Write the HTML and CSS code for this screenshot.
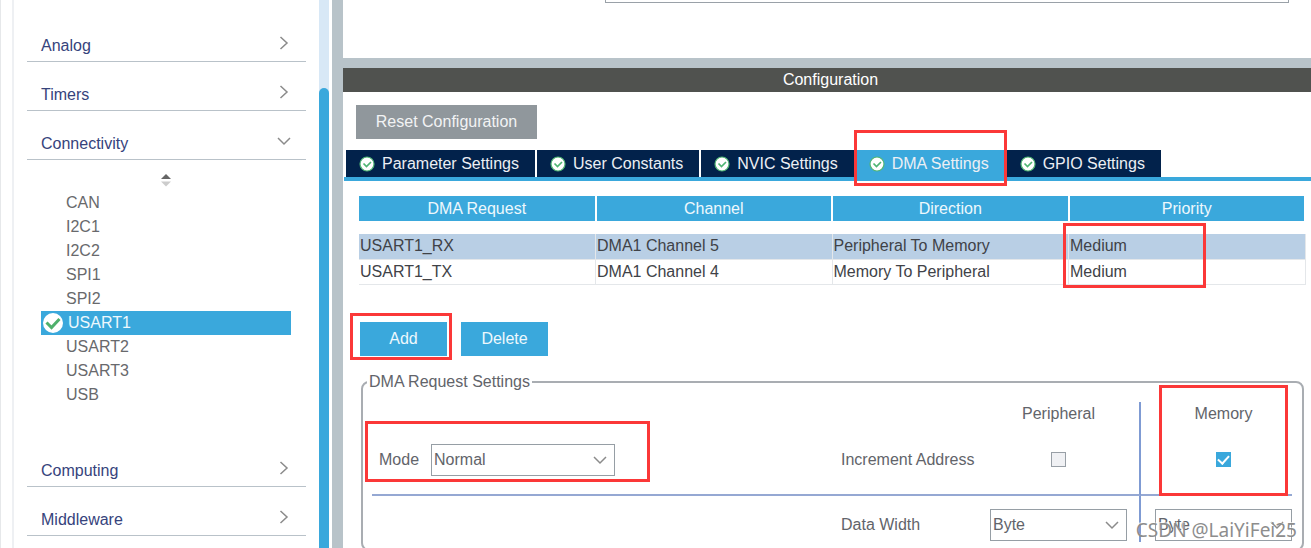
FILE: index.html
```html
<!DOCTYPE html>
<html lang="en">
<head>
<meta charset="utf-8">
<title>USART1 Configuration</title>
<link rel="stylesheet" href="styles.css">
</head>
<body>
<svg width="0" height="0" class="defs" aria-hidden="true">
  <symbol id="right" viewBox="0 0 14 14"><path d="M3.500 1l6.500 6-6.500 6" fill="none" stroke="#8b8b8b" stroke-width="1.500"/></symbol>
  <symbol id="down" viewBox="0 0 14 14"><path d="M1 4l6 6 6-6" fill="none" stroke="#8b8b8b" stroke-width="1.500"/></symbol>
  <symbol id="ok" viewBox="0 0 16 16"><circle cx="8" cy="8" r="7" fill="#fff" stroke="#4fb573" stroke-width="1.200"/><path d="M4.500 7.500l3 3 4.500-4.500" fill="none" stroke="#4fb573" stroke-width="1.700"/></symbol>
</svg>
<div class="app">
  <nav class="sidebar">
    <div class="categories">
      <button class="category">Analog<svg class="chev"><use href="#right"/></svg></button>
      <button class="category">Timers<svg class="chev"><use href="#right"/></svg></button>
      <button class="category">Connectivity<svg class="chev"><use href="#down"/></svg></button>
      <div class="group">
        <svg class="sort" viewBox="0 0 10 14"><path d="M0 6l5-5 5 5z" fill="#666"/><path d="M0 8.500h10l-5 5z" fill="#ccc"/></svg>
        <ul class="items">
          <li><a class="item" href="#">CAN</a></li>
          <li><a class="item" href="#">I2C1</a></li>
          <li><a class="item" href="#">I2C2</a></li>
          <li><a class="item" href="#">SPI1</a></li>
          <li><a class="item" href="#">SPI2</a></li>
          <li><a class="item selected" href="#"><svg class="badge" viewBox="0 0 20 20"><circle cx="10" cy="10" r="10" fill="#fff"/><path d="M3.500 9.500l5 5 8-8.500" fill="none" stroke="#4fb06c" stroke-width="3"/></svg>USART1</a></li>
          <li><a class="item" href="#">USART2</a></li>
          <li><a class="item" href="#">USART3</a></li>
          <li><a class="item" href="#">USB</a></li>
        </ul>
      </div>
      <button class="category">Computing<svg class="chev"><use href="#right"/></svg></button>
      <button class="category">Middleware<svg class="chev"><use href="#right"/></svg></button>
    </div>
    <div class="track"><div class="thumb"></div></div>
  </nav>
  <main class="main">
    <section class="upper"><div class="upper-box"></div></section>
    <h1 class="title">Configuration</h1>
    <div class="reset-row"><button class="btn reset">Reset Configuration</button></div>
    <div class="tabs">
      <button class="tab"><svg class="ok"><use href="#ok"/></svg>Parameter Settings</button>
      <button class="tab"><svg class="ok"><use href="#ok"/></svg>User Constants</button>
      <button class="tab"><svg class="ok"><use href="#ok"/></svg>NVIC Settings</button>
      <button class="tab active"><svg class="ok"><use href="#ok"/></svg>DMA Settings<span class="mark mark-tab"></span></button>
      <button class="tab"><svg class="ok"><use href="#ok"/></svg>GPIO Settings</button>
    </div>
    <section class="panel">
      <table class="requests">
        <thead>
          <tr><th>DMA Request</th><th>Channel</th><th>Direction</th><th>Priority</th></tr>
        </thead>
        <tbody>
          <tr class="current"><td>USART1_RX</td><td>DMA1 Channel 5</td><td>Peripheral To Memory</td><td>Medium<span class="mark mark-priority"></span></td></tr>
          <tr><td>USART1_TX</td><td>DMA1 Channel 4</td><td>Memory To Peripheral</td><td>Medium</td></tr>
        </tbody>
      </table>
      <div class="actions">
        <div class="anchor"><button class="btn">Add</button><span class="mark mark-add"></span></div>
        <button class="btn">Delete</button>
      </div>
      <fieldset class="settings">
        <legend>DMA Request Settings</legend>
        <div class="grid">
          <div class="cell"></div>
          <div class="cell"></div>
          <div class="cell center divider">Peripheral</div>
          <div class="cell center memory">Memory<span class="mark mark-memory"></span></div>

          <div class="cell ruled mode">
            <label for="mode">Mode</label>
            <span class="select mode-select"><select id="mode"><option>Normal</option></select><svg class="arrow"><use href="#down"/></svg></span>
            <span class="mark mark-mode"></span>
          </div>
          <div class="cell ruled">Increment Address</div>
          <div class="cell ruled center divider"><input type="checkbox" class="check" aria-label="Increment Address Peripheral" disabled></div>
          <div class="cell ruled center memory"><input type="checkbox" class="check" aria-label="Increment Address Memory" checked></div>

          <div class="cell low"></div>
          <div class="cell low">Data Width</div>
          <div class="cell low divider"><span class="select"><select aria-label="Data Width Peripheral"><option>Byte</option></select><svg class="arrow"><use href="#down"/></svg></span></div>
          <div class="cell low memory"><span class="select"><select aria-label="Data Width Memory"><option>Byte</option></select><svg class="arrow"><use href="#down"/></svg></span></div>
        </div>
      </fieldset>
    </section>
  </main>
  <div class="watermark">CSDN @LaiYiFei25</div>
</div>
</body>
</html>
```
FILE: styles.css
```css
* { box-sizing: border-box; }

body {
  margin: 0;
  font: 16px/20px "Liberation Sans", Arial, sans-serif;
  color: #62646a;
  background: #fff;
}

button, select, input { font: inherit; color: inherit; margin: 0; }
button { border: 0; padding: 0; background: none; cursor: pointer; }
.defs { position: absolute; }

.app {
  position: relative;
  display: flex;
  height: 100vh;
  overflow: hidden;
}

/* Sidebar */
.sidebar {
  flex: none;
  width: 343px;
  display: flex;
  border-left: 1px solid #e6e8ea;
  border-right: 11px solid #b8c3c9;
}
.categories {
  flex: 1;
  margin-left: 11px;
  padding: 13px 13px 0 13px;
  border-left: 2px solid #eef0f3;
}
.category {
  display: flex;
  justify-content: space-between;
  width: 100%;
  height: 49px;
  padding: 23px 15px 0 14px;
  border-bottom: 1px solid #b9c2c9;
  color: #36437c;
  text-align: left;
}
.chev { width: 14px; height: 14px; }
.group { padding: 13px 15px 31px 14px; }
.sort { display: block; width: 10px; height: 14px; margin: 0 auto 4px; }
.items { list-style: none; margin: 0; padding: 0; }
.item {
  display: flex;
  align-items: center;
  height: 24px;
  padding-left: 25px;
  color: #68696c;
  text-decoration: none;
}
.item.selected {
  gap: 5px;
  padding-left: 2px;
  background: #3aa8dc;
  color: #eef8fd;
}
.badge { width: 20px; height: 20px; }
.track {
  width: 10px;
  margin-right: 3px;
  padding-top: 88px;
  background: #d8e8f6;
}
.thumb { height: 100%; border-radius: 5px 5px 0 0; background: #3aa8dc; }

/* Main area */
.main { flex: 1; min-width: 0; }
.upper {
  height: 68px;
  padding: 0 22px 0 262px;
  border-bottom: 10px solid #b8c3c9;
}
.upper-box { height: 3px; border: 1px solid #9aa1a8; border-top: 0; }
.title {
  margin: 0;
  padding: 2px 0 2px 7px;
  background: #50524f;
  color: #fff;
  font-size: 16px;
  font-weight: 400;
  text-align: center;
}
.btn {
  width: 87px;
  height: 34px;
  background: #3aa8dc;
  color: #eef8fd;
}
.btn.reset { width: 181px; background: #90979c; color: #f2f3f4; }
.reset-row { display: flex; padding: 13px 13px 11px; }

.tabs {
  display: flex;
  gap: 2px;
  margin-left: 1px;
  padding-left: 2px;
  border-bottom: 4px solid #3aa8dc;
}
.tab {
  position: relative;
  display: flex;
  align-items: center;
  gap: 7px;
  height: 27px;
  padding: 0 16px 0 13px;
  background: #02224b;
  color: #eceff4;
}
.tab.active { background: #3aa8dc; }
.ok { width: 16px; height: 16px; }

.panel { padding: 15px 5px 0 16px; }
.requests {
  width: 100%;
  table-layout: fixed;
  border-collapse: collapse;
  color: #404247;
}
.requests th {
  height: 25px;
  padding: 0;
  border-right: 2px solid #fff;
  background: #3aa8dc;
  color: #eef8fd;
  font-weight: 400;
}
.requests tbody::before { content: ""; display: table-row; height: 13px; }
.requests td {
  position: relative;
  height: 25px;
  padding: 0 1px;
  border-right: 1px solid #e4e7ea;
  border-bottom: 1px solid #e4e7ea;
}
.current { background: #b9cfe5; }

.actions { display: flex; gap: 14px; padding: 37px 1px 16px; }
.anchor { position: relative; }

/* DMA request settings */
.settings {
  min-width: 0;
  margin: 0 2px;
  padding: 10px 10px 7px 9px;
  border: 2px solid #a9adb2;
  border-radius: 8px;
}
.settings legend { margin-left: -5px; padding: 0 2px; }
.grid {
  display: grid;
  grid-template-columns: minmax(0, 1fr) 149px 151px 151px;
  grid-template-rows: 24px 70px 46px;
}
.cell { position: relative; display: flex; align-items: center; }
.center { justify-content: center; }
.ruled { border-bottom: 2px solid #95a8d3; }
.low { padding-top: 12px; }
.divider { padding-right: 12px; border-right: 2px solid #7f9bd3; }
.memory { padding-left: 14px; }
.mode { gap: 12px; padding-left: 7px; }
.select { position: relative; flex: 1; display: flex; align-items: center; }
.mode-select { flex: none; width: 184px; }
.select select {
  appearance: none;
  width: 100%;
  height: 32px;
  padding: 0 2px;
  border: 1px solid #969ea5;
  border-radius: 0;
  background: #fff;
}
.arrow {
  position: absolute;
  right: 8px;
  width: 14px;
  height: 14px;
  pointer-events: none;
}
.check {
  appearance: none;
  display: grid;
  place-items: center;
  width: 15px;
  height: 15px;
  border: 1px solid #989fa6;
  background: #f0f1f4;
}
.check:checked { border-color: #3aa8dc; background: #3aa8dc; }
.check:checked::before {
  content: "";
  width: 9px;
  height: 5px;
  margin-bottom: 3px;
  border-left: 2px solid #fff;
  border-bottom: 2px solid #fff;
  transform: rotate(-48deg);
}

/* Highlight frames */
.mark {
  position: absolute;
  z-index: 2;
  border: 3px solid #fb3838;
  pointer-events: none;
}
.mark-tab { inset: -20px -2px -9px -2px; }
.mark-priority { top: -11px; left: -6px; width: 143px; height: 65px; }
.mark-add { inset: -9px -5px -4px -10px; }
.mark-mode { top: -5px; left: -7px; width: 285px; height: 61px; }
.mark-memory { top: -17px; left: 18px; right: 4px; height: 111px; }

.watermark {
  position: absolute;
  right: 14px;
  bottom: 6px;
  z-index: 3;
  color: #8d8d8d;
  font: 19px/24px "Noto Sans", sans-serif;
  text-shadow: -1px -1px 0 #ffffffb0;
}
```
